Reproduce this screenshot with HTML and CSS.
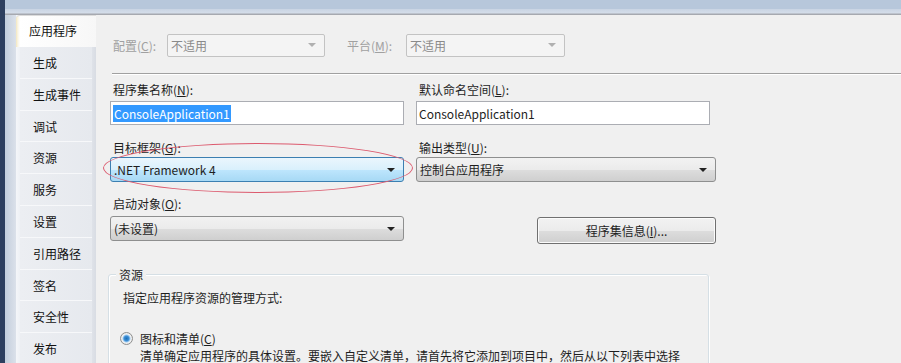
FILE: index.html
```html
<!DOCTYPE html>
<html>
<head>
<meta charset="utf-8">
<link rel="stylesheet" href="styles.css">
</head>
<body>
<div class="window">
  <div class="navy"></div>
  <div class="frame">
    <div class="topband"></div>
    <div class="body">
      <div class="sidegap"></div>
      <div class="tabs">
        <div class="tab active">应用程序</div>
        <div class="tab">生成</div>
        <div class="tab">生成事件</div>
        <div class="tab">调试</div>
        <div class="tab">资源</div>
        <div class="tab">服务</div>
        <div class="tab">设置</div>
        <div class="tab">引用路径</div>
        <div class="tab">签名</div>
        <div class="tab">安全性</div>
        <div class="tab">发布</div>
      </div>
      <div class="content">
        <div class="cfg-row">
          <span class="cfg-label l1">配置(<u>C</u>):</span>
          <div class="combo disabled w1"><span>不适用</span><i class="arrow"></i></div>
          <span class="cfg-label l2">平台(<u>M</u>):</span>
          <div class="combo disabled w2"><span>不适用</span><i class="arrow"></i></div>
        </div>
        <div class="sep"></div>
        <div class="row r1">
          <div class="field">
            <div class="label">程序集名称(<u>N</u>):</div>
            <div class="input"><span class="sel">ConsoleApplication1</span></div>
          </div>
          <div class="field">
            <div class="label">默认命名空间(<u>L</u>):</div>
            <div class="input"><span>ConsoleApplication1</span></div>
          </div>
        </div>
        <div class="row r2">
          <div class="field">
            <div class="label">目标框架(<u>G</u>):</div>
            <div class="combo focus"><span>.NET Framework 4</span><i class="arrow"></i></div>
          </div>
          <div class="field wide">
            <div class="label">输出类型(<u>U</u>):</div>
            <div class="combo normal"><span>控制台应用程序</span><i class="arrow"></i></div>
          </div>
        </div>
        <div class="row r3">
          <div class="field">
            <div class="label">启动对象(<u>O</u>):</div>
            <div class="combo normal"><span>(未设置)</span><i class="arrow"></i></div>
          </div>
          <div class="field wide btn-field">
            <div class="button">程序集信息(<u>I</u>)...</div>
          </div>
        </div>
        <div class="group">
          <div class="legend">资源</div>
          <div class="desc">指定应用程序资源的管理方式:</div>
          <div class="radio-row"><i class="radio"></i><span>图标和清单(<u>C</u>)</span></div>
          <div class="hint">清单确定应用程序的具体设置。要嵌入自定义清单，请首先将它添加到项目中，然后从以下列表中选择</div>
        </div>
        <div class="ellipse"></div>
      </div>
    </div>
  </div>
</div>
</body>
</html>
```
FILE: styles.css
```css
* { box-sizing: border-box; }
html, body { margin: 0; padding: 0; }
body {
  width: 901px;
  height: 363px;
  overflow: hidden;
  font-family: "Noto Sans CJK SC", "Noto Sans", sans-serif;
  font-size: 12px;
  color: #1e1e1e;
  background: #f0f0f0;
}
u { text-decoration: underline; }
.window { display: flex; width: 901px; height: 363px; }
.navy { width: 5px; background: #2d3f5f; flex: none; }
.frame { flex: 1; display: flex; flex-direction: column; min-width: 0; }
.topband {
  height: 15px;
  flex: none;
  background: linear-gradient(to bottom, #b7c7db 0, #b7c7db 9px, #c9d4e3 9px, #d4dde9 13px, #a6a9b0 14px, #a6a9b0 15px);
}
.body { flex: 1; display: flex; min-height: 0; }
.sidegap {
  width: 11px;
  flex: none;
  background: linear-gradient(to right, #c3cedc, #dbe1ea);
}
.tabs {
  width: 80px;
  flex: none;
  background: linear-gradient(to right, #f4f6f9 0, #eef1f5 4px, #e9ecf1 70px, #d8dce3 80px);
}
.tab {
  height: 31.8px;
  line-height: 31.8px;
  padding-left: 13px;
  margin-left: 4px;
  margin-right: 4px;
  color: #111;
  border-bottom: 1px solid #f7f8fa;
  background: linear-gradient(to right, #eceef2, #e6e9ee);
}
.tab.active {
  margin-left: 0;
  margin-right: 0;
  padding-left: 13px;
  background: linear-gradient(to right, #f3e7bf 0, #fbf6e6 2px, #ffffff 4px, #f7f7f7 100%);
  border-top: 1px solid #dcdcdc;
  border-radius: 4px 0 0 0;
  border-bottom: none;
  height: 32px;
  line-height: 30px;
}
.content {
  flex: 1;
  position: relative;
  padding: 19px 0 0 14px;
  background: #f0f0f0;
  min-width: 0;
}
.cfg-row { display: flex; align-items: center; height: 23px; }
.cfg-label { color: #a0a0a0; flex: none; }
.l1 { width: 57px; padding-left: 3px; }
.l2 { width: 59px; margin-left: 22px; }
.combo {
  position: relative;
  height: 25px;
  display: flex;
  align-items: center;
  padding-left: 3px;
  border-radius: 3px;
}
.combo .arrow {
  position: absolute;
  right: 8px;
  top: 10px;
  width: 0; height: 0;
  border-left: 4px solid transparent;
  border-right: 4px solid transparent;
  border-top: 4px solid #222;
}
.combo.disabled {
  height: 23px;
  border: 1px solid #c3c3c3;
  background: #f4f4f4;
  color: #8a8a8a;
  border-radius: 2px;
}
.combo.disabled .arrow { border-top-color: #b0b0b0; top: 8px; }
.w1 { width: 158px; }
.w2 { width: 159px; }
.sep {
  margin-top: 16px;
  margin-left: 2px;
  height: 2px;
  border-top: 1px solid #a0a0a0;
  border-bottom: 1px solid #ffffff;
}
.row { display: flex; gap: 12px; }
.field { width: 294px; flex: none; }
.field.wide { width: 300px; }
.label { padding-left: 3px; height: 17px; line-height: 17px; }
.r1 { margin-top: 6px; }
.r1 .label { margin-bottom: 3px; }
.input {
  height: 24px;
  border: 1px solid #abadb3;
  background: #fff;
  display: flex;
  align-items: center;
  padding-left: 2px;
}
.sel { background: #3399ff; color: #fff; padding: 0 1px; line-height: 17px; }
.r2 { margin-top: 14px; }
.r2 .label { margin-bottom: 1px; }
.r3 { margin-top: 13px; }
.r3 .label { margin-bottom: 4px; }
.combo.focus {
  border: 1px solid #3c7fb1;
  background: linear-gradient(to bottom, #eaf6fd 0, #d9f0fc 50%, #bee6fd 51%, #a7d9f5 100%);
}
.combo.normal {
  border: 1px solid #8e8f8f;
  background: linear-gradient(to bottom, #f2f2f2 0, #ebebeb 50%, #dddddd 51%, #cfcfcf 100%);
}
.btn-field { display: flex; justify-content: flex-end; padding-top: 22px; }
.button {
  width: 179px;
  height: 27px;
  border: 1px solid #707070;
  border-radius: 3px;
  background: linear-gradient(to bottom, #f2f2f2 0, #ebebeb 50%, #dddddd 51%, #cfcfcf 100%);
  display: flex;
  align-items: center;
  justify-content: center;
  box-shadow: inset 0 0 0 1px #fbfbfb;
}
.group {
  position: relative;
  margin-top: 30px;
  margin-left: -2px;
  width: 601px;
  height: 120px;
  border: 1px solid #d5dfe5;
  border-radius: 3px;
  box-shadow: inset 1px 1px 0 #fff, 1px 1px 0 #fff;
  padding: 14px 0 0 14px;
}
.legend {
  position: absolute;
  top: -9px;
  left: 7px;
  padding: 0 3px;
  background: #f0f0f0;
  line-height: 17px;
}
.desc { line-height: 17px; }
.radio-row { margin-top: 24px; display: flex; align-items: center; height: 17px; margin-left: -3px; }
.radio {
  width: 13px; height: 13px;
  border-radius: 50%;
  border: 1px solid #8e8f8f;
  background: radial-gradient(circle, #1b6fb6 0, #3e8fd6 2.5px, #9ccaf0 3.5px, #f4f4f4 4.5px, #e2e2e2 6px);
  margin-right: 7px;
  flex: none;
}
.hint { padding-left: 17px; line-height: 17px; white-space: nowrap; }
.ellipse {
  position: absolute;
  left: 7px;
  top: 128px;
  width: 310px;
  height: 50px;
  border: 1px solid #dc5a6e;
  border-radius: 50%;
  pointer-events: none;
}
```
